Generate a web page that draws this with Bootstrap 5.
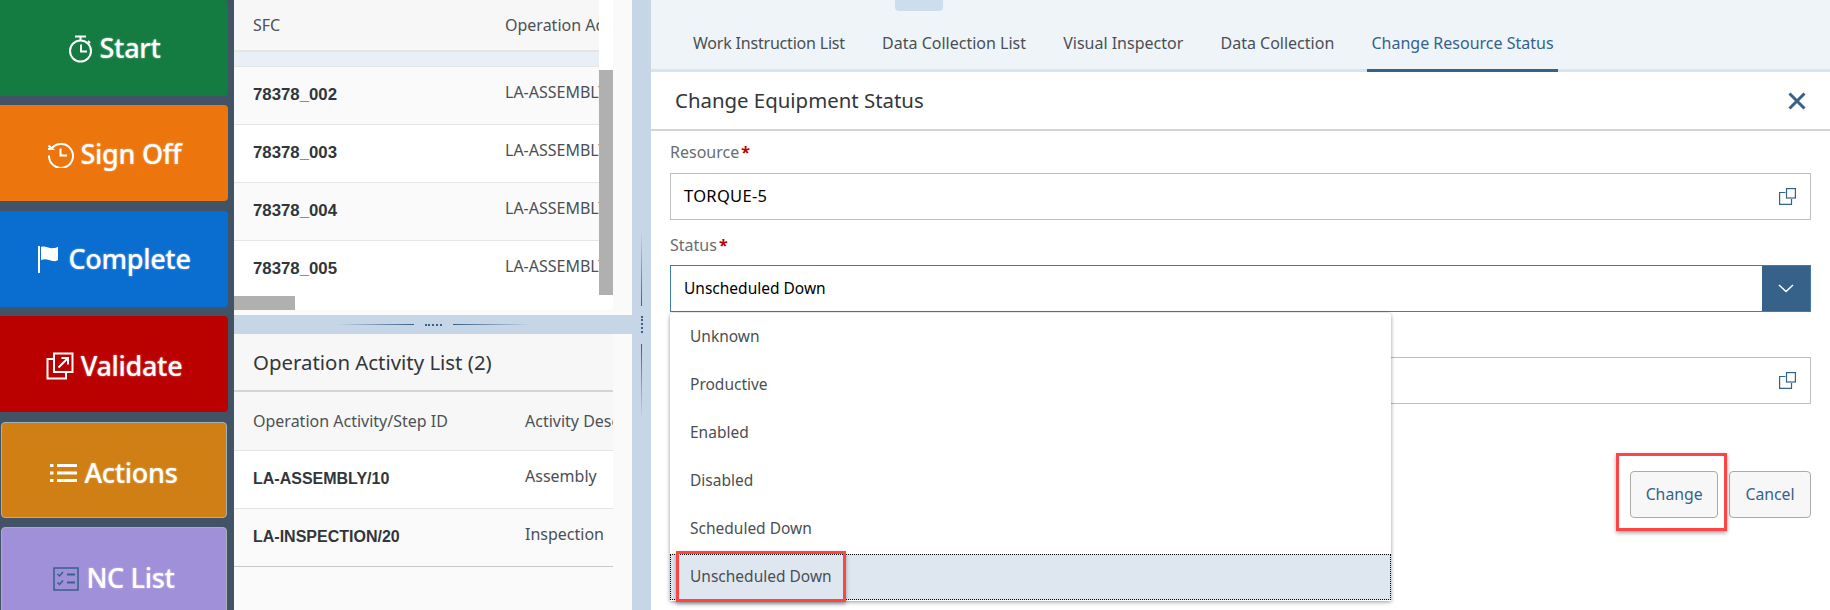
<!DOCTYPE html>
<html lang="en">
<head>
  <meta charset="UTF-8">
  <meta name="viewport" content="width=device-width, initial-scale=1">
  <title>Change Equipment Status</title>
  <link href="https://cdn.jsdelivr.net/npm/bootstrap@5.3.0/dist/css/bootstrap.min.css" rel="stylesheet">
  <style>
    html, body { height: 100%; overflow: hidden; }
    body { font-family: "Noto Sans", sans-serif; font-size: 16px; color: #32363a; background: #fafafa; }
    .pod { height: 610px; overflow: hidden; }

    /* action rail */
    .rail { width: 234px; background: #415364; padding-right: 6px; gap: 9.5px; }
    .rail-btn { height: 96px; flex: none; width: 100%; border-radius: 0 4px 4px 0; color: #fff; font-size: 27px; font-weight: 500; letter-spacing: -.3px; gap: 7px; padding: 2px 0 0; text-shadow: 0 0 2px rgba(255,255,255,.6); border: 0; }
    .rail-btn:hover { color: #fff; }
    .rail-btn svg { flex: none; }
    .rail-btn.b-start, .rail-btn.b-start:hover { background: #147c40; margin-top: -.5px; }
    .rail-btn.b-sign, .rail-btn.b-sign:hover { background: #ec750e; }
    .rail-btn.b-complete, .rail-btn.b-complete:hover { background: #0a6ed1; }
    .rail-btn.b-validate, .rail-btn.b-validate:hover { background: #bb0000; padding-top: 4px; }
    .rail-btn.b-actions, .rail-btn.b-actions:hover { background: #cf7f14; border: 1px solid #a9b0b5; border-radius: 4px; margin-left: 1px; width: 226px; padding-top: 7px; }
    .rail-btn.b-nc, .rail-btn.b-nc:hover { background: #a08fd9; border: 1px solid #a9b0b5; border-radius: 4px; margin-left: 1px; width: 226px; padding-top: 7px; }

    /* list panels */
    .lists { width: 398px; background: #fafafa; }
    .top-list { height: 315px; flex: none; }
    .top-view { width: 379px; height: 310px; }
    .top-inner { width: 365px; height: 296px; overflow: hidden; }
    .vbar { width: 14px; background: #fff; }
    .vthumb { margin-top: 70px; height: 225px; background: #b0b0b0; }
    .hbar { height: 14px; background: #fff; }
    .hthumb { width: 61px; background: #b0b0b0; }
    .grid-tbl { margin: 0; table-layout: fixed; border-collapse: collapse; font-size: 16px; color: #32363a; }
    .grid-tbl th, .grid-tbl td { padding: 0 0 0 20px; white-space: nowrap; overflow: hidden; vertical-align: middle; border: 0; border-bottom: 1px solid #e5e5e5; box-shadow: none; }
    .grid-tbl th:first-child, .grid-tbl td:first-child { padding-left: 19px; }
    .grid-tbl th { background: #f7f7f7; font-weight: 400; color: #4d5155; height: 51px; border-bottom: 2px solid #e5e5e5; }
    .grid-tbl td { height: 58px; background: #fff; }
    .grid-tbl .alt td { background: #fafafa; }
    .grid-tbl td.sfc { font-family: "Liberation Sans", sans-serif; font-weight: 700; }
    .top-tbl td.sfc { font-size: 16.8px; }
    .grid-tbl td.plain { padding-bottom: 6px; color: #4b4f53; }
    .grid-tbl .band td { height: 15px; background: #e8eff7; border-bottom: 1px solid #e5e5e5; padding: 0; }
    .top-tbl { width: 365px; }
    .low-tbl { width: 379px; }
    .low-tbl th { height: 58px; border-bottom: 1px solid #e5e5e5; }
    .low-tbl tr:last-child td { border-bottom: 1px solid #c9c9c9; }
    .split-h { height: 19px; background: #c6d6e6; gap: 11px; flex: none; }
    .grip-l { width: 78px; height: 1px; background: linear-gradient(to right, rgba(54,98,138,0), #36628a); }
    .grip-r { width: 78px; height: 1px; background: linear-gradient(to left, rgba(54,98,138,0), #36628a); }
    .grip-dots { width: 17px; border-top: 2px dotted #36628a; }
    .low-head { width: 379px; height: 58px; background: #f7f7f7; border-bottom: 2px solid #d4d4d4; padding-left: 19px; font-size: 20.4px; color: #32363a; }
    .split-v { width: 19px; background: #c6d6e6; padding-top: 230px; flex: none; }
    .grip-t { width: 1px; height: 76px; background: linear-gradient(to bottom, rgba(54,98,138,0), #36628a); }
    .grip-b { width: 1px; height: 76px; background: linear-gradient(to top, rgba(54,98,138,0), #36628a); }
    .grip-vdots { height: 17px; border-left: 2px dotted #36628a; margin: 10px 0 11px; }

    /* right side */
    .work { background: #fff; min-width: 0; }
    .tab-band { height: 72px; background: #eff4f9; border-bottom: 3px solid #d8e5f1; padding: 0 38px; flex: none; }
    .tab-pull { left: 244px; top: 0; width: 48px; height: 11px; background: #ccdeee; border-radius: 0 0 4px 4px; }
    .tab-list { gap: 0 29.2px; }
    .tab-lnk { height: 72px; padding: 31px 4px 0; color: #4b4f53; font-size: 16px; }
    .tab-lnk.tight { letter-spacing: -.2px; }
    .tab-lnk:hover { color: #4b4f53; }
    .tab-lnk.active { color: #36628a; border-bottom: 3px solid #36628a; }
    .dlg-head { height: 59px; border-bottom: 2px solid #d4d4d4; padding: 0 24px; font-size: 20.4px; flex: none; }
    .dlg-close { color: #36628a; line-height: 0; }
    .dlg-body { padding: 0 19px; }
    .fld-label { margin: 0; color: #6a6d70; font-size: 16px; line-height: 22px; }
    .fld-label.first { height: 42px; padding-top: 10px; }
    .fld-label.second { height: 45px; padding-top: 14px; }
    .fld-label.third { height: 45px; }
    .fld-label b { color: #bb0000; font-weight: 700; margin-left: 2px; }
    .fld { height: 47px; border: 1px solid #bfbfbf; border-radius: 0; padding: 0 14px 0 13px; color: #000; font-size: 15.5px; background: #fff; }
    .fld-code { font-size: 16.5px; letter-spacing: .3px; }
    .fld-sel { border-color: #427cac; padding-right: 0; }
    .sel-arrow { width: 48px; height: 45px; background: #36628a; color: #fff; border: 0; border-radius: 0; padding: 0; }
    .fld-ico { color: #36628a; line-height: 0; }
    .foot-row { margin-top: 67px; gap: 11px; }
    .foot-btn { height: 47px; background: #f7f7f7; border: 1px solid #ababab; border-radius: 4px; color: #36628a; font-size: 15.8px; padding: 0 15.4px; }
    .foot-btn.main { padding: 0 14.4px; }
    .st-menu { left: 19px; top: 182px; width: 721px; height: 288px; padding: 0; margin: 0; border: 0; border-radius: 4px 4px 0 0; box-shadow: 0 1px 4px rgba(0,0,0,.4); background: #fff; z-index: 5; }
    .st-item { height: 48px; flex: none; padding: 0 20px; border: 0; color: #4b4f53; font-size: 15.5px; background: #fff; }
    .st-item.on { background: #dee7f0; outline: 1px dotted #000; outline-offset: -1px; height: 46px; margin-top: 1px; }
    .mark-box { border: 3px solid #ff4444; box-shadow: 0 2px 4px rgba(0,0,0,.35); z-index: 9; pointer-events: none; }
    .mark-item { left: 676px; top: 551px; width: 170px; height: 51px; }
    .mark-btn { left: 1616px; top: 453px; width: 111px; height: 78px; }
  </style>
</head>
<body>
  <div class="pod d-flex position-relative">

    <!-- action buttons -->
    <div class="rail d-flex flex-column overflow-hidden">
      <a class="btn rail-btn b-start d-flex align-items-center justify-content-center">
        <svg width="25" height="28" viewBox="0 0 25 28" fill="none" stroke="#fff" stroke-width="2"><path d="M7 1.500h11"/><path d="M12.500 2v3.500"/><path d="M20 6l2 2"/><circle cx="12.500" cy="16" r="10.500"/><path d="M13 9.500V16.500H19"/></svg>
        <span>Start</span>
      </a>
      <a class="btn rail-btn b-sign d-flex align-items-center justify-content-center">
        <svg width="27" height="27" viewBox="0 0 27 27" fill="none" stroke="#fff" stroke-width="2"><path d="M5 7a12 12 0 1 1-3 7.500"/><path d="M1.500 4.500L5.500 8H1"/><path d="M13.500 7.500V14.500H20"/></svg>
        <span>Sign Off</span>
      </a>
      <a class="btn rail-btn b-complete d-flex align-items-center justify-content-center">
        <svg width="24" height="27" viewBox="0 0 24 27" fill="#fff"><rect x="1" y="0" width="2" height="27"/><path d="M4 1c5-1.500 7 2 12 1 2 0 4-.5 5-1v13c-3 2-6 1-9 0-3-1-5-1-8 0z"/></svg>
        <span>Complete</span>
      </a>
      <a class="btn rail-btn b-validate d-flex align-items-center justify-content-center">
        <svg width="28" height="28" viewBox="0 0 28 28" fill="none" stroke="#fff" stroke-width="2"><path d="M7 7H1.500V26.500H20V21"/><rect x="8" y="1.500" width="18.500" height="18.500"/><path d="M12.500 15.500L21.500 6.500M15.500 6H22V12.500"/></svg>
        <span>Validate</span>
      </a>
      <a class="btn rail-btn b-actions d-flex align-items-center justify-content-center">
        <svg width="27" height="20" viewBox="0 0 27 20" fill="#fff"><rect x="0" y="1" width="3.500" height="3"/><rect x="0" y="8.500" width="3.500" height="3"/><rect x="0" y="16" width="3.500" height="3"/><rect x="7" y="1" width="20" height="3"/><rect x="7" y="8.500" width="20" height="3"/><rect x="7" y="16" width="20" height="3"/></svg>
        <span>Actions</span>
      </a>
      <a class="btn rail-btn b-nc d-flex align-items-center justify-content-center">
        <svg width="26" height="24" viewBox="0 0 26 24" fill="none" stroke="#36628a" stroke-width="1.500"><rect x="1" y="1" width="24" height="22"/><path d="M4.500 7l2 2 3.500-4M4.500 15.500l2 2 3.500-4"/><path d="M14 7.500h8M14 15.500h8" stroke-width="2"/></svg>
        <span>NC List</span>
      </a>
    </div>

    <!-- SFC list and operation activities -->
    <div class="lists d-flex flex-column">
      <div class="top-list">
        <div class="top-view d-flex flex-column">
          <div class="d-flex">
            <div class="top-inner">
              <table class="table grid-tbl top-tbl">
                <colgroup><col style="width:251px"><col></colgroup>
                <thead><tr><th>SFC</th><th>Operation Activity</th></tr></thead>
                <tbody>
                  <tr class="band"><td></td><td></td></tr>
                  <tr class="alt"><td class="sfc">78378_002</td><td class="plain">LA-ASSEMBLY</td></tr>
                  <tr><td class="sfc">78378_003</td><td class="plain">LA-ASSEMBLY</td></tr>
                  <tr class="alt"><td class="sfc">78378_004</td><td class="plain">LA-ASSEMBLY</td></tr>
                  <tr><td class="sfc">78378_005</td><td class="plain">LA-ASSEMBLY</td></tr>
                </tbody>
              </table>
            </div>
            <div class="vbar"><div class="vthumb"></div></div>
          </div>
          <div class="hbar d-flex"><div class="hthumb"></div></div>
        </div>
      </div>
      <div class="split-h d-flex align-items-center justify-content-center">
        <span class="grip-l"></span><span class="grip-dots"></span><span class="grip-r"></span>
      </div>
      <div class="low-head d-flex align-items-center">Operation Activity List (2)</div>
      <table class="table grid-tbl low-tbl">
        <colgroup><col style="width:271px"><col></colgroup>
        <thead><tr><th>Operation Activity/Step ID</th><th>Activity Description</th></tr></thead>
        <tbody>
          <tr><td class="sfc">LA-ASSEMBLY/10</td><td class="plain">Assembly</td></tr>
          <tr class="alt"><td class="sfc">LA-INSPECTION/20</td><td class="plain">Inspection</td></tr>
        </tbody>
      </table>
    </div>

    <div class="split-v d-flex flex-column align-items-center">
      <span class="grip-t"></span><span class="grip-vdots"></span><span class="grip-b"></span>
    </div>

    <!-- change status -->
    <div class="work flex-grow-1 d-flex flex-column position-relative">
      <div class="tab-band position-relative">
        <div class="tab-pull position-absolute"></div>
        <nav class="nav tab-list">
          <a class="nav-link tab-lnk tight" href="#">Work Instruction List</a>
          <a class="nav-link tab-lnk" href="#">Data Collection List</a>
          <a class="nav-link tab-lnk" href="#">Visual Inspector</a>
          <a class="nav-link tab-lnk" href="#">Data Collection</a>
          <a class="nav-link tab-lnk active" href="#">Change Resource Status</a>
        </nav>
      </div>
      <div class="dlg-head d-flex align-items-center justify-content-between">
        <span>Change Equipment Status</span>
        <a class="dlg-close" href="#"><svg width="18" height="18" viewBox="0 0 18 18" fill="none" stroke="currentColor" stroke-width="3"><path d="M1.500 1.500L16.500 16.500M16.500 1.500L1.500 16.500"/></svg></a>
      </div>
      <div class="dlg-body position-relative flex-grow-1">
        <label class="fld-label first d-block">Resource<b>*</b></label>
        <div class="fld d-flex align-items-center justify-content-between">
          <span class="fld-code">TORQUE-5</span>
          <span class="fld-ico"><svg width="17" height="17" viewBox="0 0 17 17" fill="none" stroke="currentColor" stroke-width="1.200"><path d="M6.500 4.500H.6V16.400H12.500V11"/><rect x="7.500" y=".6" width="8.900" height="9.400"/></svg></span>
        </div>
        <label class="fld-label second d-block">Status<b>*</b></label>
        <div class="fld fld-sel d-flex align-items-center justify-content-between">
          <span>Unscheduled Down</span>
          <button class="btn sel-arrow d-flex align-items-center justify-content-center" type="button"><svg width="16" height="9" viewBox="0 0 16 9" fill="none" stroke="currentColor" stroke-width="1.500"><path d="M1 1l7 6.500L15 1"/></svg></button>
        </div>
        <div class="fld-label third"></div>
        <div class="fld d-flex align-items-center justify-content-end">
          <span class="fld-ico"><svg width="17" height="17" viewBox="0 0 17 17" fill="none" stroke="currentColor" stroke-width="1.200"><path d="M6.500 4.500H.6V16.400H12.500V11"/><rect x="7.500" y=".6" width="8.900" height="9.400"/></svg></span>
        </div>
        <div class="foot-row d-flex justify-content-end">
          <button class="btn foot-btn main" type="button">Change</button>
          <button class="btn foot-btn" type="button">Cancel</button>
        </div>
        <div class="list-group st-menu position-absolute">
          <a class="list-group-item st-item d-flex align-items-center">Unknown</a>
          <a class="list-group-item st-item d-flex align-items-center">Productive</a>
          <a class="list-group-item st-item d-flex align-items-center">Enabled</a>
          <a class="list-group-item st-item d-flex align-items-center">Disabled</a>
          <a class="list-group-item st-item d-flex align-items-center">Scheduled Down</a>
          <a class="list-group-item st-item on d-flex align-items-center">Unscheduled Down</a>
        </div>
      </div>
    </div>

    <!-- red call-outs from the guide -->
    <div class="mark-box mark-item position-absolute"></div>
    <div class="mark-box mark-btn position-absolute"></div>
  </div>
  <script src="https://cdn.jsdelivr.net/npm/bootstrap@5.3.0/dist/js/bootstrap.bundle.min.js"></script>
</body>
</html>
